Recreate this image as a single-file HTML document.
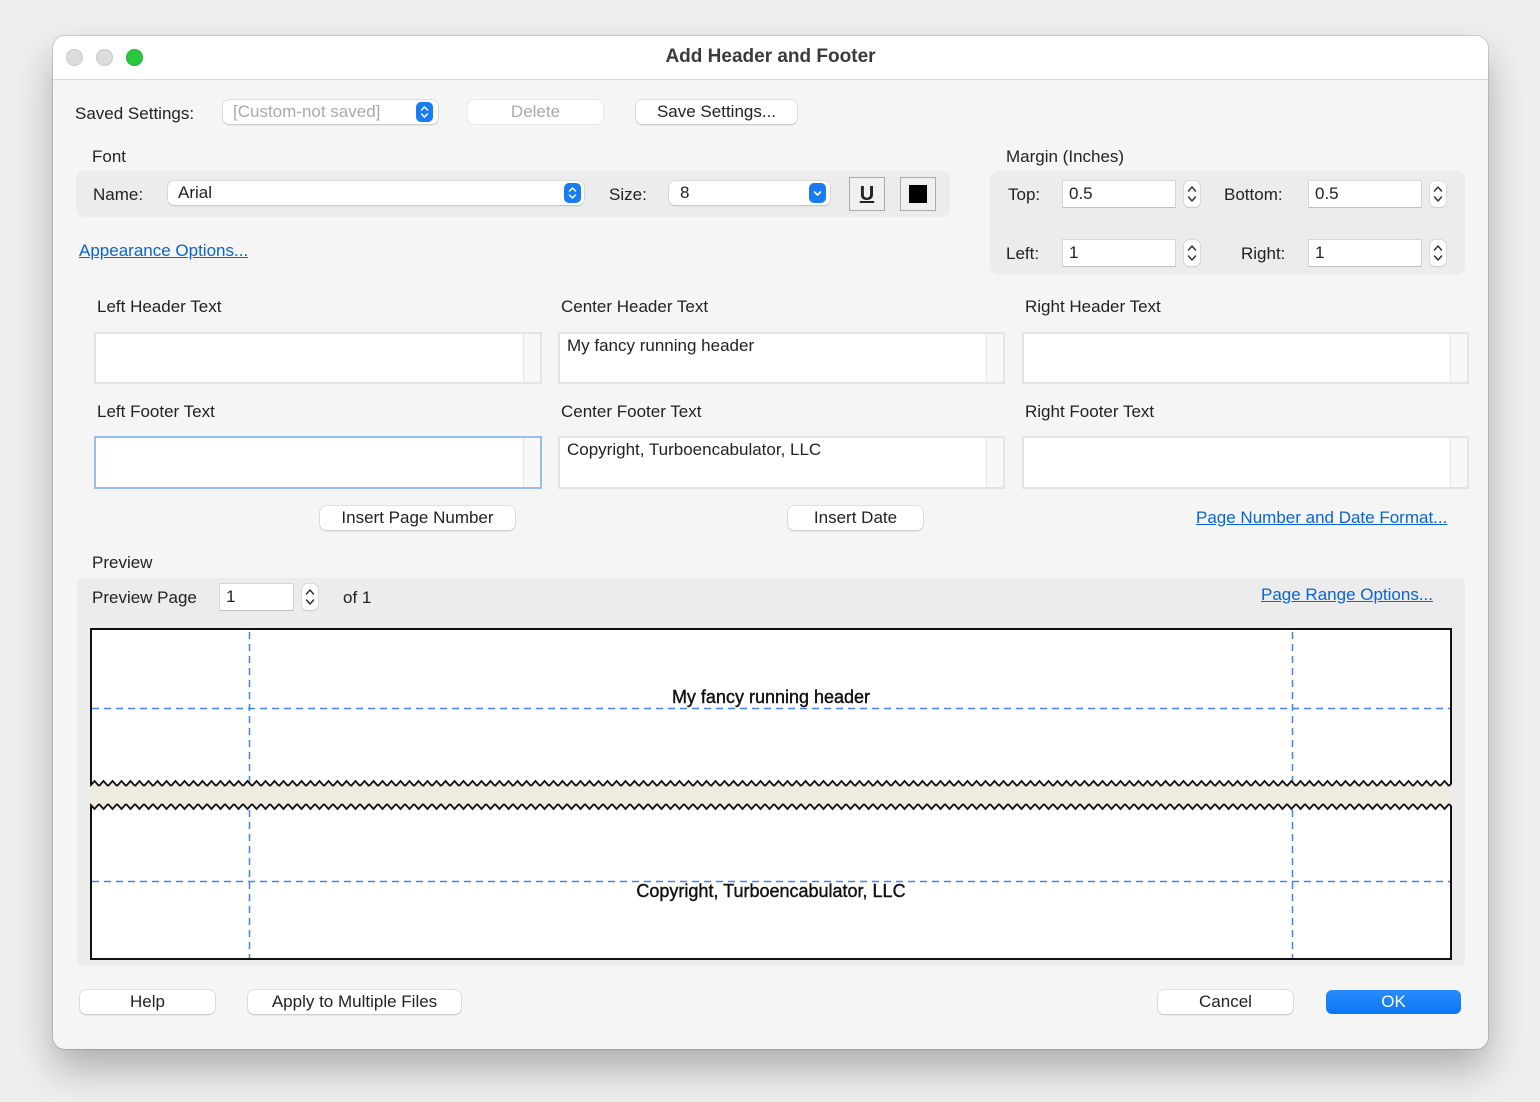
<!DOCTYPE html>
<html><head><meta charset="utf-8"><style>
*{box-sizing:border-box;margin:0;padding:0}
body{width:1540px;height:1102px;background:#efefef;font-family:"Liberation Sans",sans-serif;font-size:17px;color:#222;position:relative;overflow:hidden}
.a{position:absolute}
.win{left:53px;top:36px;width:1435px;height:1013px;background:#f5f5f5;border-radius:12px;box-shadow:0 20px 40px rgba(0,0,0,.28),0 0 0 1px #cfcfcf;overflow:hidden}
.tb{left:0;top:0;width:100%;height:44px;background:#fff;border-bottom:1px solid #dcdcdc}
.dot{width:17px;height:17px;border-radius:50%;top:13px;background:#dcdcdc;border:1px solid #cacaca}
.btn{background:#fff;border-radius:6px;box-shadow:0 0 0 .5px #c8c8c8,0 1px 1.5px rgba(0,0,0,.2);text-align:center;height:24px;line-height:24px}
.inp{background:#fff;border:1px solid #d6d6d6;border-bottom-color:#c0c0c0;height:28px;line-height:26px;padding-left:6px}
.lnk{color:#0a63d8;text-decoration:underline}
.ta{background:#fff;border:2px solid #e4e4e4;padding:4px 7px}
.ta:after{content:"";position:absolute;right:0;top:0;bottom:0;width:16px;background:#f8f8f8;border-left:1px solid #e6e6e6}
.step{width:16px;height:26px;background:#fff;border-radius:5px;box-shadow:0 0 0 .5px #c8c8c8,0 1px 1px rgba(0,0,0,.15)}
.blue{width:17px;height:20px;background:#1a7cf5;border-radius:5px}
</style></head><body>
<svg width="0" height="0" style="position:absolute"><defs>
<symbol id="ud" viewBox="0 0 16 26"><path d="M4.5 10 L8 6 L11.5 10 M4.5 16 L8 20 L11.5 16" fill="none" stroke="#333" stroke-width="1.5" stroke-linecap="round" stroke-linejoin="round"/></symbol>
<symbol id="udw" viewBox="0 0 17 20"><path d="M5.5 8 L8.5 5 L11.5 8 M5.5 12 L8.5 15 L11.5 12" fill="none" stroke="#fff" stroke-width="1.5" stroke-linecap="round" stroke-linejoin="round"/></symbol>
<symbol id="dw" viewBox="0 0 17 20"><path d="M5.5 9 L8.5 12 L11.5 9" fill="none" stroke="#fff" stroke-width="1.6" stroke-linecap="round" stroke-linejoin="round"/></symbol>
</defs></svg>
<div class="a win">
<div class="a tb"></div>
<div class="a dot" style="left:13px"></div>
<div class="a dot" style="left:43px"></div>
<div class="a dot" style="left:73px;background:#2ac840;border-color:#25b139"></div>
<div class="a" style="left:0;width:100%;top:10px;text-align:center;font-weight:bold;font-size:19px;color:#3a3a3a">Add Header and Footer</div>
</div>
<div class="a" style="left:75px;top:104px">Saved Settings:</div>
<div class="a btn" style="left:223px;top:100px;width:215px;color:#aaa;text-align:left;padding-left:10px">[Custom-not saved]</div>
<svg class="a blue" style="left:416px;top:102px"><use href="#udw"/></svg>
<div class="a btn" style="left:468px;top:100px;width:135px;color:#aaa;box-shadow:0 0 0 .5px #ddd">Delete</div>
<div class="a btn" style="left:636px;top:100px;width:161px">Save Settings...</div>
<div class="a" style="left:92px;top:147px">Font</div>
<div class="a" style="left:76px;top:171px;width:874px;height:46px;background:#ececec;border-radius:8px"></div>
<div class="a" style="left:93px;top:185px">Name:</div>
<div class="a btn" style="left:168px;top:181px;width:416px;text-align:left;padding-left:10px">Arial</div>
<svg class="a blue" style="left:564px;top:183px"><use href="#udw"/></svg>
<div class="a" style="left:609px;top:185px">Size:</div>
<div class="a btn" style="left:669px;top:181px;width:161px;text-align:left;padding-left:11px">8</div>
<svg class="a blue" style="left:809px;top:183px"><use href="#dw"/></svg>
<div class="a" style="left:849px;top:177px;width:36px;height:34px;border:1px solid #aaa;background:#f0f0f0;text-align:center;line-height:32px;font-weight:bold;font-size:20px;text-decoration:underline;font-family:'Liberation Sans',sans-serif">U</div>
<div class="a" style="left:900px;top:177px;width:36px;height:34px;border:1px solid #aaa;background:#f0f0f0"><div class="a" style="left:8px;top:7px;width:18px;height:18px;background:#000"></div></div>
<div class="a lnk" style="left:79px;top:241px">Appearance Options...</div>
<div class="a" style="left:1006px;top:147px">Margin (Inches)</div>
<div class="a" style="left:990px;top:171px;width:475px;height:103px;background:#ececec;border-radius:8px"></div>
<div class="a" style="left:1008px;top:185px">Top:</div>
<div class="a inp" style="left:1062px;top:180px;width:114px">0.5</div>
<svg class="a step" style="left:1184px;top:181px"><use href="#ud"/></svg>
<div class="a" style="left:1224px;top:185px">Bottom:</div>
<div class="a inp" style="left:1308px;top:180px;width:114px">0.5</div>
<svg class="a step" style="left:1430px;top:181px"><use href="#ud"/></svg>
<div class="a" style="left:1006px;top:244px">Left:</div>
<div class="a inp" style="left:1062px;top:239px;width:114px">1</div>
<svg class="a step" style="left:1184px;top:240px"><use href="#ud"/></svg>
<div class="a" style="left:1241px;top:244px">Right:</div>
<div class="a inp" style="left:1308px;top:239px;width:114px">1</div>
<svg class="a step" style="left:1430px;top:240px"><use href="#ud"/></svg>
<div class="a" style="left:97px;top:297px">Left Header Text</div>
<div class="a" style="left:561px;top:297px">Center Header Text</div>
<div class="a" style="left:1025px;top:297px">Right Header Text</div>
<div class="a ta" style="left:94px;top:332px;width:448px;height:52px"></div>
<div class="a ta" style="left:558px;top:332px;width:447px;height:52px;padding-top:2px">My fancy running header</div>
<div class="a ta" style="left:1022px;top:332px;width:447px;height:52px"></div>
<div class="a" style="left:97px;top:402px">Left Footer Text</div>
<div class="a" style="left:561px;top:402px">Center Footer Text</div>
<div class="a" style="left:1025px;top:402px">Right Footer Text</div>
<div class="a ta" style="left:94px;top:436px;width:448px;height:53px;border-color:#9bbcf0"></div>
<div class="a ta" style="left:558px;top:436px;width:447px;height:53px;padding-top:2px">Copyright, Turboencabulator, LLC</div>
<div class="a ta" style="left:1022px;top:436px;width:447px;height:53px"></div>
<div class="a btn" style="left:320px;top:506px;width:195px">Insert Page Number</div>
<div class="a btn" style="left:788px;top:506px;width:135px">Insert Date</div>
<div class="a lnk" style="left:1196px;top:508px">Page Number and Date Format...</div>
<div class="a" style="left:92px;top:553px">Preview</div>
<div class="a" style="left:77px;top:578px;width:1388px;height:388px;background:#ececec;border-radius:6px"></div>
<div class="a" style="left:92px;top:588px">Preview Page</div>
<div class="a inp" style="left:219px;top:583px;width:75px">1</div>
<svg class="a step" style="left:302px;top:584px"><use href="#ud"/></svg>
<div class="a" style="left:343px;top:588px">of 1</div>
<div class="a lnk" style="left:1261px;top:585px">Page Range Options...</div>
<svg class="a" style="left:90px;top:628px" width="1362" height="332">
<defs><pattern id="zt" x="0" y="0" width="9" height="332" patternUnits="userSpaceOnUse"><path d="M0 158 L4.5 153 L9 158" fill="none" stroke="#111" stroke-width="1.8"/></pattern>
<pattern id="zb" x="0" y="0" width="9" height="332" patternUnits="userSpaceOnUse"><path d="M0 176 L4.5 181 L9 176" fill="none" stroke="#111" stroke-width="1.8"/></pattern>
<pattern id="zf" x="0" y="0" width="9" height="332" patternUnits="userSpaceOnUse"><path d="M0 158 L4.5 153 L9 158 L9 176 L4.5 181 L0 176Z" fill="#efebe0"/></pattern></defs>
<rect x="1" y="1" width="1360" height="330" fill="#fff" stroke="#111" stroke-width="2"/>
<rect x="0" y="156" width="1362" height="22" fill="#ececec"/>
<rect x="0" y="0" width="1362" height="332" fill="url(#zf)"/>
<g stroke="#3f86f0" stroke-width="1.5" stroke-dasharray="7,5" fill="none">
<line x1="159.5" y1="4" x2="159.5" y2="155"/><line x1="1202.5" y1="4" x2="1202.5" y2="155"/>
<line x1="159.5" y1="182" x2="159.5" y2="330"/><line x1="1202.5" y1="182" x2="1202.5" y2="330"/>
<line x1="2" y1="80.5" x2="1360" y2="80.5"/><line x1="2" y1="253.5" x2="1360" y2="253.5"/>
</g>
<rect x="0" y="0" width="1362" height="332" fill="url(#zt)"/>
<rect x="0" y="0" width="1362" height="332" fill="url(#zb)"/>
<text x="681" y="75" text-anchor="middle" font-family="Liberation Sans,sans-serif" font-size="18" stroke="#111" stroke-width=".4" fill="#111">My fancy running header</text>
<text x="681" y="269" text-anchor="middle" font-family="Liberation Sans,sans-serif" font-size="18" stroke="#111" stroke-width=".4" fill="#111">Copyright, Turboencabulator, LLC</text>
</svg>
<div class="a btn" style="left:80px;top:990px;width:135px">Help</div>
<div class="a btn" style="left:248px;top:990px;width:213px">Apply to Multiple Files</div>
<div class="a btn" style="left:1158px;top:990px;width:135px">Cancel</div>
<div class="a btn" style="left:1326px;top:990px;width:135px;background:linear-gradient(#2a8cfd,#0a76f5);color:#fff;box-shadow:none">OK</div>
</body></html>
